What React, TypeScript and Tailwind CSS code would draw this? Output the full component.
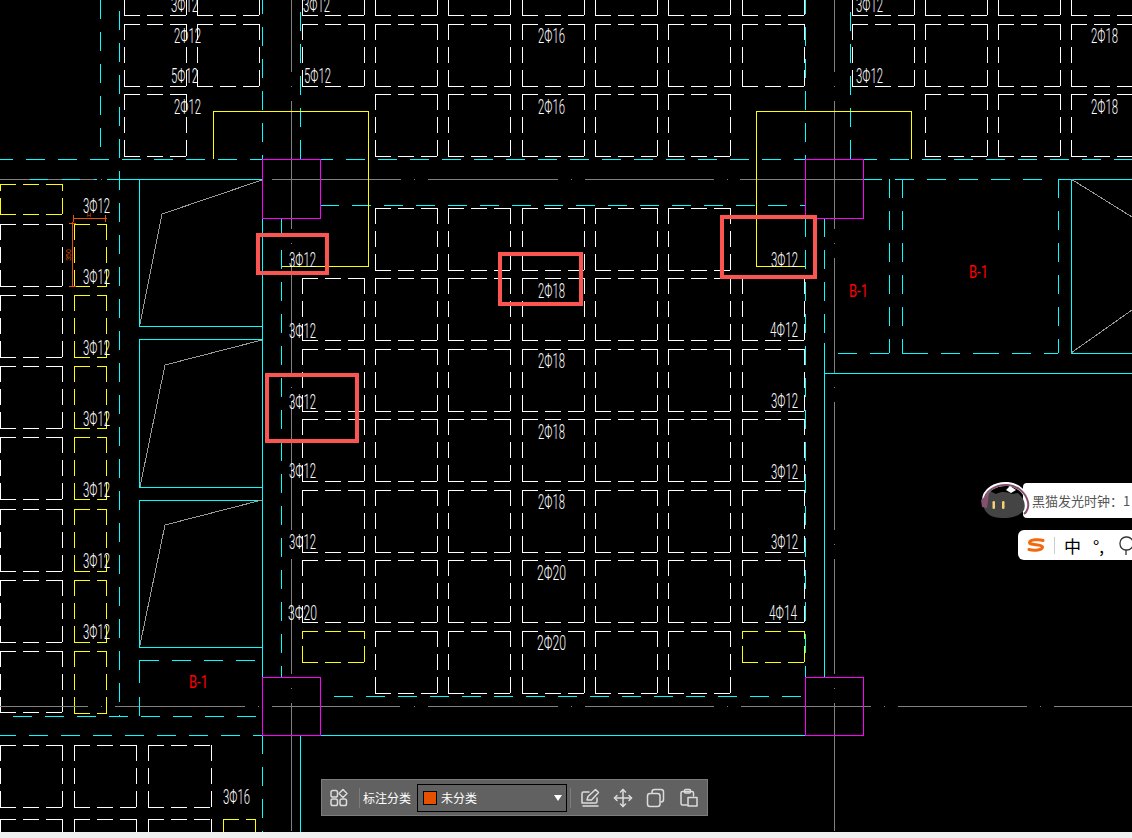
import React from 'react';

const WHITE = '#ffffff';
const YELLOW = '#ffff00';
const CYAN = '#00ffff';
const MAGENTA = '#ff00ff';
const GRAY = '#808080';
const RED = '#ff0000';
const MARK = '#fb5552';

type BoxSpec = [number, number, number?, number?, string?];

function Box({ x, y, w = 62, h = 62, color = WHITE }: { x: number; y: number; w?: number; h?: number; color?: string }) {
    const short = h < 40;
    const vy1 = short ? y + h : y;
    const vy2 = short ? y : y + h;
    return (
        <g stroke={color} strokeDasharray="16 7">
            <line x1={x} y1={y + 0.5} x2={x + w + 1} y2={y + 0.5} />
            <line x1={x} y1={y + h + 0.5} x2={x + w + 1} y2={y + h + 0.5} />
            <line x1={x + 0.5} y1={vy1} x2={x + 0.5} y2={vy2} />
            <line x1={x + w + 0.5} y1={vy1} x2={x + w + 0.5} y2={vy2} />
        </g>
    );
}

function Dash({ d, color = CYAN, dash = '19 13', offset = 0 }: { d: string; color?: string; dash?: string; offset?: number }) {
    return <path d={d} stroke={color} strokeDasharray={dash} strokeDashoffset={offset} fill="none" />;
}

function Solid({ d, color = CYAN }: { d: string; color?: string }) {
    return <path d={d} stroke={color} fill="none" />;
}

function Rebar({ x, y, t, w = 27 }: { x: number; y: number; t: string; w?: number }) {
    return (
        <text
            x={x}
            y={y}
            fill={WHITE}
            fontFamily="Roboto, sans-serif"
            fontWeight={300}
            fontSize={20}
            textLength={w}
            lengthAdjust="spacingAndGlyphs"
        >
            {t}
        </text>
    );
}

function Tag({ x, y }: { x: number; y: number }) {
    return (
        <text
            x={x}
            y={y}
            fill={RED}
            fontFamily="Roboto, sans-serif"
            fontWeight={400}
            fontSize={19}
            textLength={19}
            lengthAdjust="spacingAndGlyphs"
        >
            B-1
        </text>
    );
}

const centerCols = [375, 448, 522, 595, 668];
const centerRows = [208, 278, 349, 419, 490, 560, 631];
const topCols = [375, 448, 522, 595, 668, 925, 998, 1071];
const leftRows = [224, 295, 366, 437, 509, 580, 651];

const boxes: BoxSpec[] = [
    [124, -47], [197, -47], [302, -47], [742, -47], [852, -47],
    [124, 24], [197, 24], [302, 24], [742, 24], [852, 24],
    [124, 94],
    ...topCols.flatMap((x): BoxSpec[] => [[x, -47], [x, 24], [x, 94]]),
    ...centerCols.flatMap((x) => centerRows.map((y): BoxSpec => [x, y])),
    ...[278, 349, 419, 490, 560].flatMap((y): BoxSpec[] => [[302, y], [742, y]]),
    [302, 631, 62, 31, YELLOW],
    [742, 631, 62, 31, YELLOW],
    [0, 184, 62, 30, YELLOW],
    ...leftRows.flatMap((y): BoxSpec[] => [[0, y, 62, y === 651 ? 61 : 62], [74, y, 32, 62, YELLOW]]),
    [0, 745], [74, 745], [148, 745, 63],
    [0, 819], [74, 819], [148, 819, 63],
    [223, 819, 32, 62, YELLOW],
];

const rebars: [number, number, string, number?][] = [
    [171, 12, '3Φ12'], [303, 12, '3Φ12'], [174, 43, '2Φ12'], [171, 83, '5Φ12'], [304, 83, '5Φ12'], [174, 114, '2Φ12'],
    [538, 43, '2Φ16'], [538, 114, '2Φ16'], [856, 12, '3Φ12'], [856, 83, '3Φ12'], [1091, 43, '2Φ18'], [1091, 114, '2Φ18'],
    [83, 213, '3Φ12'], [83, 284, '3Φ12'], [83, 355, '3Φ12'], [83, 426, '3Φ12'], [83, 497, '3Φ12'], [83, 568, '3Φ12'], [83, 639, '3Φ12'],
    [289, 267, '3Φ12'], [289, 338, '3Φ12'], [289, 409, '3Φ12'], [289, 478, '3Φ12'], [289, 549, '3Φ12'], [288, 620, '3Φ20', 29],
    [538, 298, '2Φ18'], [538, 368, '2Φ18'], [538, 439, '2Φ18'], [538, 509, '2Φ18'], [537, 580, '2Φ20', 29], [537, 650, '2Φ20', 29],
    [771, 267, '3Φ12'], [770, 337, '4Φ12', 28], [771, 408, '3Φ12'], [771, 479, '3Φ12'], [771, 549, '3Φ12'], [769, 620, '4Φ14', 28],
    [223, 804, '3Φ16'],
];

function Drawing() {
    return (
        <svg width="1132" height="832" viewBox="0 0 1132 832" shapeRendering="crispEdges" className="block">
            {boxes.map(([x, y, w, h, color], i) => (
                <Box key={i} x={x} y={y} w={w} h={h} color={color} />
            ))}

            {/* centre lines */}
            <Dash d="M291.5 -43V832" color={GRAY} dash="115 14 1 14 128 14 1 14" />
            <Dash d="M834.5 -43V832" color={GRAY} dash="115 14 1 14 128 14 1 14" />
            <Solid d="M0 179.5H97M272 179.5H401M428 179.5H558M585 179.5H714M740 179.5H863" color={GRAY} />
            <Solid d="M101 179.5h1M414 179.5h1M571 179.5h1M727 179.5h1" color={GRAY} />
            <Solid d="M0 706.5H88M115 706.5H245M272 706.5H400M428 706.5H558M585 706.5H714M741 706.5H871M898 706.5H1027M1054 706.5H1132" color={GRAY} />
            <Solid d="M101 706.5h1M258 706.5h1M414 706.5h1M571 706.5h1M727 706.5h1M884 706.5h1M1040 706.5h1" color={GRAY} />

            {/* beam lines */}
            <Dash d="M-6 159.5H1132" />
            <Dash d="M320 205.5H805" />
            <Dash d="M334 696.5H805" />
            <Dash d="M13 716.5H262" />
            <Dash d="M-3 735.5H262" />
            <Solid d="M320 735.5H805" />
            <Dash d="M30 179.5H97" dash="18 14" />
            <Solid d="M107 179.5H262" />
            <Dash d="M863 179.5H1045" dash="19 13" />
            <Solid d="M1058 179.5H1132" />
            <Solid d="M824 373.5H1132" />

            <Dash d="M100.5 0V159" />
            <Dash d="M119.5 11V716" />
            <Dash d="M262.5 -5V159" />
            <Dash d="M262.5 735V832" />
            <Dash d="M281.5 218V677" />
            <Dash d="M300.5 12V159" />
            <Solid d="M300.5 735V832" />
            <Dash d="M805.5 -5V159" />
            <Dash d="M805.5 218V677" />
            <Dash d="M824.5 218V343" />
            <Solid d="M824.5 343V677" />
            <Dash d="M850.5 12V159" />
            <Dash d="M889.5 179V353" />
            <Dash d="M902.5 179V353" />
            <Dash d="M1058.5 179V353" />
            <Dash d="M838 353.5H889" />
            <Dash d="M902 353.5H1058" dash="26 13 19 13" />
            <Solid d="M1071.5 179V353.5H1132" />

            {/* slab panels on the left */}
            <Solid d="M262.5 179V677M139.5 179V326.5H262M139.5 487.5V339.5H262M139.5 647.5V500.5H262M139.5 487.5H262M139.5 647.5H262" />
            <Dash d="M139.5 660.5H262" />
            <Dash d="M139.5 660V716" dash="23 14" />
            <path d="M262 180L162 214L140 324M262 340L165 365L140 487M262 500L165 525L140 645" stroke="#9a9a9a" fill="none" />
            <path d="M1071 179L1132 217M1071 353L1132 310" stroke="#9a9a9a" fill="none" />

            {/* walls */}
            <Solid d="M213.5 159V111.5H368.5V266.5H282" color={YELLOW} />
            <Solid d="M805 266.5H756.5V111.5H911.5V159" color={YELLOW} />

            {/* columns */}
            <Solid d="M262.5 159.5H320.5V218.5H262.5ZM262.5 677.5H320.5V735.5H262.5ZM805.5 159.5H863.5V218.5H805.5ZM805.5 677.5H863.5V735.5H805.5Z" color={MAGENTA} />

            {rebars.map(([x, y, t, w], i) => (
                <Rebar key={i} x={x} y={y} t={t} w={w} />
            ))}
            <Tag x={969} y={278} />
            <Tag x={849} y={297} />
            <Tag x={189} y={688} />

            {/* dimension */}
            <g stroke="#e65100" fill="none">
                <path d="M73 218.5H107M73.5 215V222M105.5 215V222M72.5 222V287M69 223.5H76M69 286.5H76" />
            </g>
            <text x="89" y="217" fill="#e65100" fontSize="6" textAnchor="middle" fontFamily='"Liberation Sans", sans-serif'>
                H
            </text>
            <text
                transform="translate(71 255) rotate(-90)"
                fill="#e65100"
                fontSize="7"
                textAnchor="middle"
                fontFamily='"Liberation Sans", sans-serif'
            >
                350
            </text>

            {/* review marks */}
            <g stroke={MARK} strokeWidth="3.5" fill="none">
                <rect x="258" y="235" width="69" height="38" />
                <rect x="267" y="375" width="90" height="66" />
                <rect x="500" y="254" width="81" height="50" />
                <rect x="722" y="217" width="93" height="60" />
            </g>
        </svg>
    );
}

function ToolIcon({ children }: { children: React.ReactNode }) {
    return (
        <svg width="20" height="20" viewBox="0 0 20 20" fill="none" stroke="#dcdcdc" strokeWidth="1.5" strokeLinecap="round" strokeLinejoin="round">
            {children}
        </svg>
    );
}

function Toolbar() {
    return (
        <div className="absolute left-[321px] top-[779px] flex h-[37px] w-[387px] items-center border border-[#7d7d7d] bg-[#616161] pl-[7px] text-[12px] text-white font-['Noto_Sans_CJK_SC',sans-serif]">
            <ToolIcon>
                <rect x="2" y="2.5" width="6.5" height="6.5" rx="1.8" />
                <path d="M14 1.5L18 5.5 14 9.5 10 5.5Z" />
                <rect x="2" y="11" width="6.5" height="6.5" rx="1.8" />
                <rect x="11" y="11" width="6.5" height="6.5" rx="1.8" />
            </ToolIcon>
            <div className="ml-[10px] h-[20px] w-px bg-[#7d7d7d]" />
            <span className="ml-[3px] w-[48px] whitespace-nowrap">标注分类</span>
            <div className="ml-[6px] flex h-[28px] w-[150px] items-center border border-black pl-[5px]">
                <span className="h-[14px] w-[14px] border border-black bg-[#e65100]" />
                <span className="ml-[4px]">未分类</span>
                <span className="ml-auto mr-[4px] h-0 w-0 border-x-[4.5px] border-t-[6px] border-x-transparent border-t-white" />
            </div>
            <div className="ml-[3px] h-[20px] w-px bg-[#7d7d7d]" />
            <div className="ml-[9px] flex items-center gap-[13px]">
                <ToolIcon>
                    <path d="M9 4H3.5A1.5 1.5 0 0 0 2 5.5V15h13.5a1.5 1.5 0 0 0 1.5-1.5V10" />
                    <path d="M3 18h15" />
                    <path d="M7 12l1-3.5L15.5 1.5l3 3-7 7.5Z" />
                </ToolIcon>
                <ToolIcon>
                    <path d="M10 1.5v17M1.5 10h17" />
                    <path d="M7.5 4L10 1.5 12.5 4M7.5 16L10 18.5 12.5 16M4 7.5L1.5 10 4 12.5M16 7.5L18.5 10 16 12.5" />
                </ToolIcon>
                <ToolIcon>
                    <rect x="1.5" y="5.5" width="12.5" height="13" rx="2.5" />
                    <path d="M6 5V4a2.5 2.5 0 0 1 2.5-2.5H15A2.5 2.5 0 0 1 17.5 4v7.5a2.5 2.5 0 0 1-2.5 2.5" />
                </ToolIcon>
                <ToolIcon>
                    <path d="M8 17H3.5A1.5 1.5 0 0 1 2 15.5V5a1.5 1.5 0 0 1 1.5-1.5H13A1.5 1.5 0 0 1 14.5 5v3" />
                    <rect x="5.5" y="1.5" width="6" height="3.5" rx="1" />
                    <rect x="9" y="9.5" width="9" height="8.5" />
                </ToolIcon>
            </div>
        </div>
    );
}

function CatWidget() {
    return (
        <>
            <div className="absolute left-[1023px] top-[483px] flex h-[35px] w-[109px] items-center overflow-hidden rounded-l-[4px] bg-white pl-[9px] font-['Noto_Sans_CJK_SC',sans-serif] text-[13px] whitespace-nowrap text-[#555555]">
                黑猫发光时钟：1
            </div>
            <svg className="absolute left-[978px] top-[478px]" width="54" height="42" viewBox="0 0 54 42" shapeRendering="geometricPrecision">
                <path d="M6 30C5 22 9 16 12 13L18 16C24 13 30 14 34 16L40 15C46 20 48 26 46 32C42 38 34 40 24 40C14 40 8 36 6 30Z" fill="#444444" />
                <path d="M6 24C5 12 18 5 30 6C40 7 48 14 50 24C51 29 49 34 46 36" fill="none" stroke="#ffffff" strokeWidth="4" />
                <path d="M6 24C6 13 18 6 30 7C40 8 48 15 50 24C51 29 49 34 46 36" fill="none" stroke="#84506f" strokeWidth="2" />
                <path d="M3 22L11 15L9 30L4 29Z" fill="#84506f" />
                <path d="M32 8L38 12L33 15L28 12Z" fill="#ffffff" />
                <rect x="14.5" y="23" width="2.5" height="8" rx="1.2" fill="#f5cf7a" />
                <rect x="24" y="23" width="2.5" height="8" rx="1.2" fill="#f5cf7a" />
            </svg>
            <div className="absolute left-[1018px] top-[530px] flex h-[30px] w-[114px] items-center overflow-hidden rounded-l-[6px] bg-white pl-[9px] font-['Noto_Sans_CJK_SC',sans-serif] text-black">
                <svg className="shrink-0" width="18" height="14" viewBox="0 0 18 14" fill="none" stroke="#f26a10" strokeWidth="3" strokeLinecap="round">
                    <path d="M16 2.5C12 1 3 1.5 2.5 4.5C2 7.5 15 6 15.5 9C16 12 7 13 2 11.5" />
                </svg>
                <div className="ml-[9px] h-[17px] w-px shrink-0 bg-[#cccccc]" />
                <span className="ml-[9px] text-[17px] leading-none">中</span>
                <span className="ml-[12px] text-[17px] leading-none">°</span>
                <span className="text-[17px] leading-none">,</span>
                <svg className="ml-[15px] shrink-0" width="14" height="22" viewBox="0 0 14 22" fill="none" stroke="#333333" strokeWidth="1.3">
                    <rect x="1" y="3" width="13" height="13" rx="6" />
                    <path d="M7 16v5" />
                </svg>
            </div>
        </>
    );
}

export default function App() {
    return (
        <div className="flex h-[838px] w-[1132px] flex-col overflow-hidden bg-black">
            <div className="relative h-[832px] w-full">
                <Drawing />
            </div>
            <div className="h-[6px] w-full bg-[#f0f0f0]" />
            <Toolbar />
            <CatWidget />
        </div>
    );
}
